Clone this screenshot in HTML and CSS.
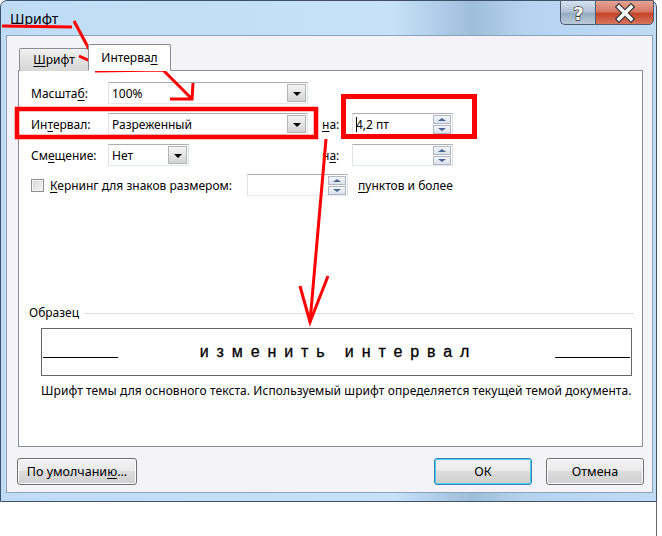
FILE: index.html
```html
<!DOCTYPE html>
<html lang="ru">
<head>
    <meta charset="UTF-8">
    <title>Шрифт</title>
    <link rel="stylesheet" href="styles.css">
</head>
<body>
    <div class="window">
        <div class="titlebar">
            <span class="title">Шрифт</span>
            <div class="caption-buttons">
                <div class="cap-btn help">
                    <svg width="35" height="25" viewBox="0 0 35 25"><text x="17.5" y="19" text-anchor="middle" class="cap-glyph">?</text></svg>
                </div>
                <div class="cap-btn close">
                    <svg width="58" height="25" viewBox="0 0 58 25">
                        <path d="M23 6 L35 18 M35 6 L23 18" stroke="#3b3b3b" stroke-width="6" stroke-linecap="square"/>
                        <path d="M23 6 L35 18 M35 6 L23 18" stroke="#fff" stroke-width="3.4" stroke-linecap="square"/>
                    </svg>
                </div>
            </div>
        </div>
        <div class="client">
            <div class="tabs">
                <div class="tab"><u>Ш</u>рифт</div>
                <div class="tab active">Интерва<u>л</u></div>
            </div>
            <div class="panel">
                <div class="fields">
                    <label>Масшта<u>б</u>:</label>
                    <div class="combo"><span>100%</span><span class="drop"></span></div>
                    <span></span><span></span><span></span>

                    <label>Ин<u>т</u>ервал:</label>
                    <div class="combo"><span>Разреженный</span><span class="drop"></span></div>
                    <span></span>
                    <label class="small-label"><u>н</u>а:</label>
                    <div class="spin">
                        <span class="value"><i class="caret"></i>4,2 пт</span>
                        <span class="arrows"><b class="up"></b><b class="down"></b></span>
                    </div>

                    <label>См<u>е</u>щение:</label>
                    <div class="combo short"><span>Нет</span><span class="drop"></span></div>
                    <span></span>
                    <label class="small-label">н<u>а</u>:</label>
                    <div class="spin">
                        <span class="value"></span>
                        <span class="arrows"><b class="up"></b><b class="down"></b></span>
                    </div>
                </div>

                <div class="kerning">
                    <span class="checkbox"></span>
                    <span class="kern-label"><u>К</u>ернинг для знаков размером:</span>
                    <div class="spin kern-spin">
                        <span class="value"></span>
                        <span class="arrows"><b class="up"></b><b class="down"></b></span>
                    </div>
                    <span class="kern-after"><u>п</u>унктов и более</span>
                </div>

                <div class="sample-head">
                    <span>Образец</span>
                    <span class="rule"></span>
                </div>
                <div class="sample">
                    <span class="sample-line"></span>
                    <span class="sample-text">изменить интервал</span>
                    <span class="sample-line"></span>
                </div>
                <p class="note">Шрифт темы для основного текста. Используемый шрифт определяется текущей темой документа.</p>
            </div>
            <div class="actions">
                <button class="btn wide">По умолчани<u>ю</u>...</button>
                <span class="spacer"></span>
                <button class="btn primary">ОК</button>
                <button class="btn">Отмена</button>
            </div>
        </div>
    </div>

    <svg class="marks" width="662" height="536" viewBox="0 0 662 536">
        <g fill="none" stroke="#ff0000" stroke-linejoin="miter">
            <path d="M2 26 L72 27" stroke-width="3"/>
            <path d="M74 21 L97 64" stroke-width="3"/>
            <path d="M79 56 L97 64 L95 45" stroke-width="3"/>
            <path d="M95 71 L163 70 L192 99" stroke-width="3"/>
            <path d="M170 99 L192 99 L193 83" stroke-width="3"/>
            <rect x="17" y="109" width="299" height="28" stroke-width="4.5"/>
            <rect x="343.5" y="96.5" width="131" height="40" stroke-width="5"/>
            <path d="M326 139 L310 322" stroke-width="3"/>
            <path d="M300 286 L310 322 L328 276" stroke-width="3"/>
        </g>
        <path d="M656.5 501 L656.5 536" stroke="#6a6a6a" stroke-width="1"/>
    </svg>
</body>
</html>
```

FILE: styles.css
```css
body {
    margin: 0;
    background: #fff;
    font-family: "Noto Sans", "Open Sans", sans-serif;
    font-size: 12px;
    color: #000;
}
u {
    text-decoration-thickness: 1px;
    text-underline-offset: 2px;
}
.window {
    width: 657px;
    height: 502px;
    box-sizing: border-box;
    border: 1px solid #3e5168;
    border-radius: 7px 7px 0 0;
    background: linear-gradient(90deg, #bfdcf6 0%, #c6e1f9 60%, #9fbedc 72%, #b5d3f0 80%, #c0dbf4 100%);
    display: flex;
    flex-direction: column;
}
.titlebar {
    height: 34px;
    display: flex;
    align-items: flex-start;
}
.title {
    font-size: 14px;
    margin: 8px 0 0 9px;
    color: #000;
}
.caption-buttons {
    margin: -1px 2px 0 auto;
    display: flex;
}
.cap-btn {
    height: 25px;
    border: 1px solid #4e5d72;
    box-sizing: border-box;
}
.help {
    width: 35px;
    border-radius: 0 0 0 5px;
    border-right: none;
    background: linear-gradient(#d6e2ee, #b3c4d6 45%, #98acc2 55%, #b9cad9);
}
.close {
    width: 59px;
    border-radius: 0 0 5px 0;
    background: linear-gradient(#e6a496, #d77a66 45%, #c4442b 55%, #d8775e);
}
.cap-glyph {
    font-family: "DejaVu Sans", sans-serif;
    font-weight: bold;
    font-size: 18px;
    fill: #fff;
    stroke: #3b3b3b;
    stroke-width: 1.3px;
    paint-order: stroke;
}
.client {
    flex: 1;
    margin: 0 3px 8px 5px;
    border: 1px solid #8ea3ba;
    background: #f4f3f7;
    padding: 8px 9px 0 11px;
}
.tabs {
    display: flex;
    align-items: flex-end;
    margin-left: 1px;
    margin-bottom: -1px;
}
.tab {
    height: 23px;
    box-sizing: border-box;
    width: 70px;
    border: 1px solid #898c95;
    border-bottom: none;
    border-radius: 2px 2px 0 0;
    background: linear-gradient(#f1f1f1, #e2e2e2 50%, #d7d7d7);
    text-align: center;
    line-height: 21px;
}
.tab.active {
    position: relative;
    z-index: 1;
    width: 83px;
    height: 27px;
    margin-left: -1px;
    background: #fff;
    line-height: 25px;
    border-bottom: 1px solid #fff;
}
.panel {
    height: 377px;
    box-sizing: border-box;
    border: 1px solid #898c95;
    background: #fff;
    padding: 11px 0 0 12px;
}
.fields {
    display: grid;
    grid-template-columns: 77px 200px 14px 30px 101px;
    grid-auto-rows: 22px;
    row-gap: 9px;
    align-items: center;
}
.combo, .spin {
    height: 22px;
    box-sizing: border-box;
    border: 1px solid #abadb3;
    border-color: #abadb3 #dbdfe6 #e3e9ef #e2e3ea;
    background: #fff;
    display: flex;
    align-items: center;
    padding-left: 3px;
}
.combo.short {
    width: 81px;
}
.drop {
    margin-left: auto;
    margin-right: 1px;
    width: 19px;
    height: 18px;
    box-sizing: border-box;
    border: 1px solid #b4b4b4;
    background: linear-gradient(#f4f4f4, #e4e4e4 50%, #d2d2d2);
    display: flex;
    align-items: center;
    justify-content: center;
}
.drop::after {
    content: "";
    border-left: 4px solid transparent;
    border-right: 4px solid transparent;
    border-top: 4px solid #000;
    margin-top: 1px;
}
.spin .value {
    flex: 1;
    display: flex;
    align-items: center;
}
.caret {
    display: inline-block;
    width: 0;
    height: 15px;
    border-left: 1px solid #000;
    margin-right: -1px;
}
.arrows {
    display: flex;
    flex-direction: column;
    margin-right: 1px;
}
.arrows b {
    width: 18px;
    height: 9px;
    box-sizing: border-box;
    border: 1px solid #b0b6c2;
    background: linear-gradient(#f3f6fa, #dbe2ec);
    display: flex;
    align-items: center;
    justify-content: center;
}
.arrows b + b {
    margin-top: 1px;
}
.arrows .up::after {
    content: "";
    border-left: 4px solid transparent;
    border-right: 4px solid transparent;
    border-bottom: 3px solid #4d6390;
}
.arrows .down::after {
    content: "";
    border-left: 4px solid transparent;
    border-right: 4px solid transparent;
    border-top: 3px solid #4d6390;
}
.kerning {
    display: flex;
    align-items: center;
    height: 22px;
    margin-top: 8px;
}
.checkbox {
    width: 13px;
    height: 13px;
    box-sizing: border-box;
    border: 1px solid #8e8f8f;
    background: linear-gradient(135deg, #d4d4d4, #f6f6f6);
    box-shadow: inset 0 0 0 1px #f4f4f4;
    margin-right: 6px;
}
.kern-label {
    width: 197px;
}
.kern-spin {
    width: 101px;
}
.kern-after {
    margin-left: 10px;
}
.sample-head {
    display: flex;
    align-items: center;
    margin: 109px 0 0 -2px;
    line-height: 16px;
}
.rule {
    flex: 1;
    height: 1px;
    background: #d5dfe5;
    margin: 0 8px 0 5px;
}
.sample {
    margin: 7px 0 0 10px;
    width: 591px;
    height: 48px;
    box-sizing: border-box;
    border: 1px solid #646464;
    display: flex;
    align-items: center;
    justify-content: space-between;
    padding: 0 1px;
}
.sample-line {
    width: 75px;
    height: 1px;
    background: #000;
    margin-top: 10px;
}
.sample-text {
    font-family: "Liberation Sans", Arial, sans-serif;
    font-size: 16px;
    letter-spacing: 7.9px;
    margin-right: -4px;
    -webkit-text-stroke: 0.3px #000;
}
.note {
    margin: 7px 0 0 10px;
    line-height: 16px;
    white-space: nowrap;
    letter-spacing: 0.08px;
}
.actions {
    display: flex;
    margin: 11px -1px 0 -1px;
    gap: 14px;
}
.spacer {
    flex: 1;
}
.btn {
    width: 98px;
    height: 27px;
    font: inherit;
    font-size: 12.5px;
    color: #000;
    border: 1px solid #707070;
    border-radius: 3px;
    background: linear-gradient(#f2f2f2, #ebebeb 45%, #dddddd 50%, #cfcfcf);
    box-shadow: inset 0 0 0 1px #fcfcfc;
    padding: 0;
}
.btn.wide {
    width: 120px;
}
.btn.primary {
    border-color: #3c7fb1;
    box-shadow: inset 0 0 0 1px #48d0f4;
}
.marks {
    position: absolute;
    top: 0;
    left: 0;
    pointer-events: none;
}
```
